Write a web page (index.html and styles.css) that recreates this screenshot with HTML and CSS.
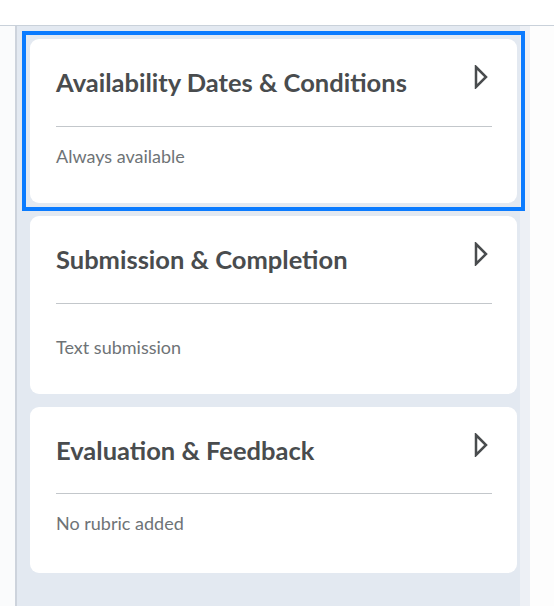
FILE: index.html
```html
<!DOCTYPE html>
<html lang="en">
<head>
<meta charset="utf-8">
<title>Assignment settings</title>
<link rel="stylesheet" href="styles.css">
</head>
<body>
<div class="topbar"></div>
<div class="main">
  <div class="gutter"></div>
  <div class="panel">
    <div class="focus-ring">
      <section class="card card-1">
        <div class="card-head">
          <h2 class="card-title">Availability Dates &amp; Conditions</h2>
          <svg class="chev" width="14" height="24" viewBox="0 0 14 24" aria-hidden="true"><path d="M2 2 L12 12 L2 22 Z" fill="none" stroke="#494c4e" stroke-width="2.5"/></svg>
        </div>
        <div class="card-body">Always available</div>
      </section>
    </div>
    <section class="card card-2">
      <div class="card-head">
        <h2 class="card-title">Submission &amp; Completion</h2>
        <svg class="chev" width="14" height="24" viewBox="0 0 14 24" aria-hidden="true"><path d="M2 2 L12 12 L2 22 Z" fill="none" stroke="#494c4e" stroke-width="2.5"/></svg>
      </div>
      <div class="card-body">Text submission</div>
    </section>
    <section class="card card-3">
      <div class="card-head">
        <h2 class="card-title">Evaluation &amp; Feedback</h2>
        <svg class="chev" width="14" height="24" viewBox="0 0 14 24" aria-hidden="true"><path d="M2 2 L12 12 L2 22 Z" fill="none" stroke="#494c4e" stroke-width="2.5"/></svg>
      </div>
      <div class="card-body">No rubric added</div>
    </section>
  </div>
  <div class="scrolltrack"></div>
  <div class="side"></div>
</div>
</body>
</html>
```
FILE: styles.css
```css
html, body {
  margin: 0;
  padding: 0;
  height: 100%;
  overflow: hidden;
}
body {
  font-family: Lato, "Noto Sans", sans-serif;
  background: #ffffff;
  color: #494c4e;
}
.topbar {
  height: 25px;
  background: #ffffff;
  border-bottom: 1px solid #c9d1da;
}
.main {
  display: flex;
  height: 580px;
}
.gutter {
  width: 15px;
  background: #fafbfc;
  border-right: 2px solid #cdd3dc;
}
.panel {
  width: 487px;
  background: #e3e9f1;
  padding: 13px 3px 0 13px;
  display: flex;
  flex-direction: column;
  gap: 13px;
}
.scrolltrack {
  width: 10px;
  background: #edf0f5;
}
.side {
  flex: 1;
  background: #fdfdfd;
}
.focus-ring {
  position: relative;
  z-index: 1;
  outline: 4px solid #0a7bff;
  outline-offset: 4px;
}
.card {
  background: #ffffff;
  border-radius: 9px;
  padding: 0 25px 0 26px;
  box-sizing: border-box;
}
.card-head {
  height: 87px;
  display: flex;
  align-items: flex-start;
  justify-content: space-between;
  border-bottom: 1px solid #c3c7cb;
}
.card-title {
  margin: 28px 0 0 0;
  font-size: 25.5px;
  line-height: 30px;
  font-weight: 700;
  color: #494c4e;
}
.chev {
  margin-top: 26px;
  margin-right: 4px;
  display: block;
}
.card-body {
  font-size: 18px;
  line-height: 24px;
  color: #6e7376;
  margin-top: 17px;
}
.card-1 { height: 164px; }
.card-2 { height: 178px; }
.card-2 .card-body { margin-top: 31px; }
.card-3 { height: 166px; }
.card-3 .card-head { height: 86px; }
```
